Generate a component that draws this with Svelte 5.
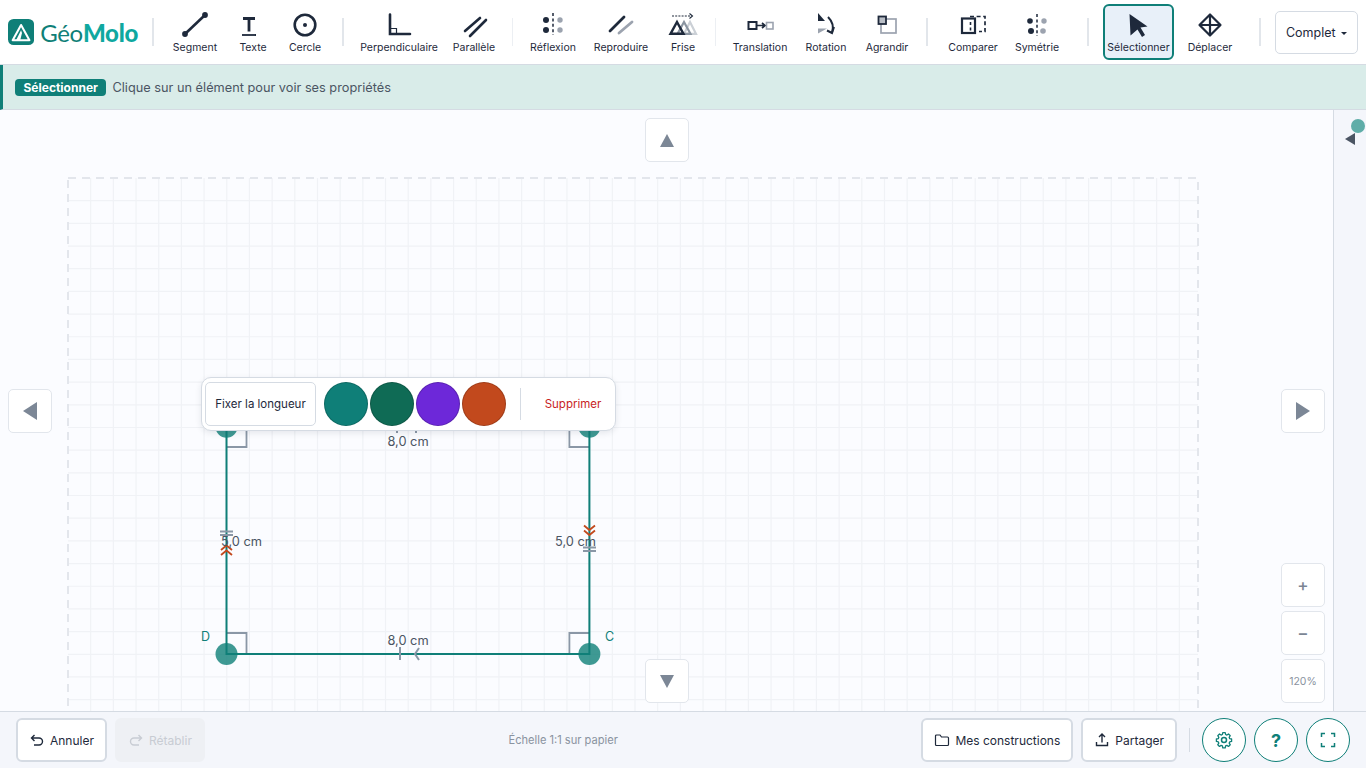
<script>
  const tools = [
    { sep: true, l: 14, r: 14 },
    { id: 'segment', label: 'Segment', w: 54 },
    { id: 'texte', label: 'Texte', w: 62 },
    { id: 'cercle', label: 'Cercle', w: 42 },
    { sep: true, l: 16, r: 16 },
    { id: 'perp', label: 'Perpendiculaire', w: 78 },
    { id: 'para', label: 'Parallèle', w: 72 },
    { sep: true, thin: true, l: 2, r: 3 },
    { id: 'reflex', label: 'Réflexion', w: 74 },
    { id: 'repro', label: 'Reproduire', w: 62 },
    { id: 'frise', label: 'Frise', w: 62 },
    { sep: true, thin: true, l: 1, r: 2 },
    { id: 'trans', label: 'Translation', w: 84 },
    { id: 'rot', label: 'Rotation', w: 48 },
    { id: 'agr', label: 'Agrandir', w: 74 },
    { sep: true, l: 2, r: 2 },
    { id: 'comp', label: 'Comparer', w: 86 },
    { id: 'sym', label: 'Symétrie', w: 42 },
    { sep: true, l: 29, r: 14 },
    { id: 'select', label: 'Sélectionner', w: 71, active: true },
    { id: 'move', label: 'Déplacer', w: 60, ml: 6 },
    { sep: true, l: 19, r: 14 }
  ];
  const swatches = ['#0f7f78', '#0f6b55', '#6d28d9', '#c2491d'];

  // sheet grid: half a centimetre at 120%
  const step = 22.68;
  const gridX = Array.from({ length: 49 }, (_, i) => 68 + step * (i + 1));
  const gridY = Array.from({ length: 24 }, (_, i) => 178 + step * (i + 1));
</script>

<div class="app">
  <header class="toolbar">
    <div class="logo">
      <svg width="28" height="28" viewBox="0 0 28 28">
        <rect width="28" height="28" rx="6" fill="#0f7f78" />
        <path d="M14 6.5 L23 22.8 H5 Z" fill="none" stroke="#fff" stroke-width="2.2" stroke-linejoin="round" />
        <path d="M14 12 L8.5 23 H13 L15 15 Z" fill="#fff" />
      </svg>
      <span class="logo-text">Géo<b>Molo</b></span>
    </div>

    {#each tools as t}
      {#if t.sep}
        <span class="sep" class:thin={t.thin} style="margin-left:{t.l}px;margin-right:{t.r}px"></span>
      {:else}
        <button class="tool" class:active={t.active} style="width:{t.w}px;margin-left:{t.ml || 0}px">
          <svg class="ico" width="36" height="30" viewBox="0 0 36 30">
            {#if t.id === 'segment'}
              <path d="M8 23 L28 4" stroke="#1e293b" stroke-width="2.6" />
              <circle cx="8" cy="23" r="2.9" fill="#1e293b" /><circle cx="28" cy="4" r="2.9" fill="#1e293b" />
            {:else if t.id === 'texte'}
              <path d="M8 7.5 H20 M14 7.5 V20.5" stroke="#1e293b" stroke-width="2.8" fill="none" />
              <path d="M7 24 H21" stroke="#1e293b" stroke-width="1.8" />
            {:else if t.id === 'cercle'}
              <circle cx="18" cy="14" r="10.3" fill="none" stroke="#1e293b" stroke-width="2.6" />
              <circle cx="18" cy="14" r="2" fill="#1e293b" />
            {:else if t.id === 'perp'}
              <path d="M9 3.5 V23 H29" stroke="#1e293b" stroke-width="2.6" fill="none" stroke-linecap="round" />
              <path d="M10 17.5 H15.5 V22" stroke="#1e293b" stroke-width="1.2" fill="none" />
            {:else if t.id === 'para'}
              <path d="M9 20 L24 7 M14 25 L30 9" stroke="#1e293b" stroke-width="2.6" stroke-linecap="round" />
            {:else if t.id === 'reflex'}
              <path d="M18 2 V24" stroke="#1e293b" stroke-width="1.5" stroke-dasharray="3 2.4" />
              <circle cx="11" cy="9" r="3" fill="#1e293b" /><circle cx="11" cy="19" r="3" fill="#1e293b" />
              <circle cx="25" cy="9" r="2.7" fill="#9ca3af" /><circle cx="25" cy="19" r="2.7" fill="#9ca3af" />
            {:else if t.id === 'sym'}
              <path d="M18 3 V25" stroke="#1e293b" stroke-width="1.5" stroke-dasharray="3 2.4" />
              <circle cx="11" cy="10" r="2.8" fill="#1e293b" /><circle cx="12" cy="20" r="3" fill="#1e293b" />
              <circle cx="25" cy="10" r="2.7" fill="#9ca3af" /><circle cx="24" cy="20" r="2.8" fill="#9ca3af" />
            {:else if t.id === 'repro'}
              <path d="M7 20 L21 6" stroke="#1e293b" stroke-width="2.8" stroke-linecap="round" />
              <path d="M16 22 L29 11" stroke="#9ca3af" stroke-width="2.8" stroke-linecap="round" />
            {:else if t.id === 'frise'}
              <path d="M7 5 H26" stroke="#1e293b" stroke-width="1.1" stroke-dasharray="2 1.2" />
              <path d="M24.5 2.5 L27.5 5 L24.5 7.5" stroke="#1e293b" stroke-width="1.1" fill="none" />
              <path d="M25 11 L31 22.8 H19 Z" fill="none" stroke="#cbd0d6" stroke-width="2.2" />
              <path d="M19 11 L25.5 22.8 H12.5 Z" fill="none" stroke="#8b95a1" stroke-width="2.2" />
              <path d="M12 11 L18.5 22.8 H5.5 Z" fill="none" stroke="#1e293b" stroke-width="2.4" />
            {:else if t.id === 'trans'}
              <rect x="6.5" y="11" width="8" height="7" fill="none" stroke="#1e293b" stroke-width="2" />
              <path d="M15 14.5 H22.5 M20 12 L23 14.5 L20 17" stroke="#1e293b" stroke-width="1.7" fill="none" />
              <rect x="24.5" y="11.5" width="6.5" height="6.5" fill="none" stroke="#9ca3af" stroke-width="1.6" />
            {:else if t.id === 'rot'}
              <path d="M10 2 V10 H17 Z" fill="#1e293b" />
              <path d="M10 22.5 V17.5 H19 Z" fill="#9ca3af" />
              <path d="M20 6 Q27 13 24 21.5" stroke="#1e293b" stroke-width="2" fill="none" />
              <path d="M19 19.5 L24 22 L26 16" stroke="#1e293b" stroke-width="2" fill="none" />
            {:else if t.id === 'agr'}
              <rect x="12" y="8" width="15" height="14" fill="none" stroke="#9ca3af" stroke-width="1.7" />
              <rect x="9.5" y="5.5" width="7.5" height="7.5" fill="#b9bec6" stroke="#1e293b" stroke-width="1.8" />
            {:else if t.id === 'comp'}
              <rect x="7" y="7.5" width="13" height="14.5" fill="none" stroke="#1e293b" stroke-width="2.2" />
              <path d="M15.5 11 V21" stroke="#1e293b" stroke-width="1.6" stroke-dasharray="3 2.5" />
              <path d="M15 5.5 H30 V20.5 H24" fill="none" stroke="#1e293b" stroke-width="1.7" stroke-dasharray="4 2.6" />
            {:else if t.id === 'select'}
              <path d="M8.5 3 L26.5 15.5 L19.5 16.5 L24 24 L21 26 L16.5 18.5 L9.5 24.5 Z" fill="#1e293b" />
            {:else if t.id === 'move'}
              <path d="M18 3.5 L28.5 14 L18 24.5 L7.5 14 Z M18 3.5 V24.5 M7.5 14 H28.5" fill="none" stroke="#1e293b" stroke-width="2.2" stroke-linejoin="round" />
            {/if}
          </svg>
          <span class="tool-label">{t.label}</span>
        </button>
      {/if}
    {/each}

    <button class="mode">Complet <span class="caret"></span></button>
  </header>

  <div class="hint">
    <span class="badge">Sélectionner</span>
    <span class="hint-text">Clique sur un élément pour voir ses propriétés</span>
  </div>

  <div class="middle">
    <main class="canvas">
      <svg class="sheet" width="1333" height="601" viewBox="0 110 1333 601">
        <g stroke="#f0f2f6" stroke-width="1.2">
          {#each gridX as x}
            <line x1={x} y1="178" x2={x} y2="980" />
          {/each}
          {#each gridY as y}
            <line x1="68" y1={y} x2="1198" y2={y} />
          {/each}
        </g>
        <rect x="68" y="178" width="1130" height="800" fill="none" stroke="#e3e6ec" stroke-width="2" stroke-dasharray="8 6" />

        <!-- right angle marks -->
        <g fill="none" stroke="#8a97a6" stroke-width="1.8">
          <path d="M226.5 447 H246.5 V427" />
          <path d="M589.4 447 H569.4 V427" />
          <path d="M226.5 633 H246.5 V654" />
          <path d="M589.4 633 H569.4 V654" />
        </g>

        <path d="M226.5 426.7 H589.4 V654 H226.5 Z" fill="none" stroke="#0f7f78" stroke-width="2" />

        <circle cx="226.5" cy="426.7" r="11" fill="#0f7f78" fill-opacity="0.8" />
        <circle cx="589.4" cy="426.7" r="11" fill="#0f7f78" fill-opacity="0.8" />
        <circle cx="226.5" cy="654" r="11" fill="#0f7f78" fill-opacity="0.8" />
        <circle cx="589.4" cy="654" r="11" fill="#0f7f78" fill-opacity="0.8" />

        <!-- edge marks -->
        <g stroke="#8a97a6" stroke-width="2" fill="none">
          <path d="M220 531.5 H233 M220 535 H233" />
          <path d="M583 547.5 H596 M583 551 H596" />
          <path d="M400 647 V660" />
          <path d="M419 648 L415 654 L419 660" />
          <path d="M397 420 V433 M416 420 V433" />
        </g>
        <g stroke="#c2491d" stroke-width="1.8" fill="none">
          <path d="M221 550 L226.5 545.5 L232 550 M221 555 L226.5 550.5 L232 555" />
          <path d="M584 525.5 L589.4 530 L595 525.5 M584 530.5 L589.4 535 L595 530.5" />
        </g>

        <text class="len" x="408" y="445.5" text-anchor="middle">8,0 cm</text>
        <text class="len" x="408" y="645" text-anchor="middle">8,0 cm</text>
        <text class="len" x="221" y="546">5,0 cm</text>
        <text class="len" x="555" y="546">5,0 cm</text>
        <text class="pt" x="201" y="641">D</text>
        <text class="pt" x="605" y="641">C</text>
      </svg>

      <button class="nav nav-top"><span class="tri up"></span></button>
      <button class="nav nav-left"><span class="tri left"></span></button>
      <button class="nav nav-right"><span class="tri right"></span></button>
      <button class="nav nav-bottom"><span class="tri down"></span></button>

      <div class="zoom">
        <button class="nav-static big">+</button>
        <button class="nav-static big">−</button>
        <button class="nav-static pct">120%</button>
      </div>

      <div class="popup">
        <button class="fix">Fixer la longueur</button>
        <div class="swatches">
          {#each swatches as c}
            <span class="swatch" style="background:{c}"></span>
          {/each}
        </div>
        <span class="popup-sep"></span>
        <button class="del">Supprimer</button>
      </div>
    </main>

    <aside class="side">
      <span class="side-tri"></span>
      <span class="side-dot"></span>
    </aside>
  </div>

  <footer class="footer">
    <button class="btn">
      <svg width="16" height="16" viewBox="0 0 16 16" fill="none" stroke="#1e293b" stroke-width="1.4"><path d="M5.5 3 L2.5 6 L5.5 9 M3 6 H10 A3.5 3.5 0 0 1 10 13 H5" /></svg>
      Annuler
    </button>
    <button class="btn off">
      <svg width="16" height="16" viewBox="0 0 16 16" fill="none" stroke="#c8ccd3" stroke-width="1.4"><path d="M10.5 3 L13.5 6 L10.5 9 M13 6 H6 A3.5 3.5 0 0 0 6 13 H11" /></svg>
      Rétablir
    </button>
    <span class="scale">Échelle 1:1 sur papier</span>
    <button class="btn">
      <svg width="16" height="16" viewBox="0 0 16 16" fill="none" stroke="#1e293b" stroke-width="1.2"><path d="M1.5 4 A1 1 0 0 1 2.5 3 H6 L7.5 5 H13.5 A1 1 0 0 1 14.5 6 V12.5 A1 1 0 0 1 13.5 13.5 H2.5 A1 1 0 0 1 1.5 12.5 Z" /></svg>
      Mes constructions
    </button>
    <button class="btn">
      <svg width="16" height="16" viewBox="0 0 16 16" fill="none" stroke="#1e293b" stroke-width="1.4"><path d="M8 10.5 V2.5 M5 5 L8 2 L11 5 M2.5 10 V13.5 H13.5 V10" /></svg>
      Partager
    </button>
    <span class="foot-sep"></span>
    <button class="round" aria-label="Réglages">
      <svg width="20" height="20" viewBox="0 0 24 24" fill="none" stroke="#0f7f78" stroke-width="1.8"><circle cx="12" cy="12" r="3" /><path d="M10.3 3 h3.4 l.5 2.6 1.9.8 2.2-1.5 2.4 2.4-1.5 2.2.8 1.9 2.6.5 v3.4 l-2.6.5 -.8 1.9 1.5 2.2 -2.4 2.4 -2.2-1.5 -1.9.8 -.5 2.6 h-3.4 l-.5-2.6 -1.9-.8 -2.2 1.5 -2.4-2.4 1.5-2.2 -.8-1.9 -2.6-.5 v-3.4 l2.6-.5 .8-1.9 -1.5-2.2 2.4-2.4 2.2 1.5 1.9-.8 Z" transform="translate(12 12) scale(.86) translate(-12 -13.3)" stroke-linejoin="round" /></svg>
    </button>
    <button class="round q">?</button>
    <button class="round" aria-label="Plein écran">
      <svg width="16" height="16" viewBox="0 0 16 16" fill="none" stroke="#0f7f78" stroke-width="1.5"><path d="M1.5 5 V1.5 H5 M11 1.5 H14.5 V5 M14.5 11 V14.5 H11 M5 14.5 H1.5 V11" /></svg>
    </button>
  </footer>
</div>

<style>
  :global(body) {
    margin: 0;
    font-family: Inter, "Liberation Sans", sans-serif;
    color: #1e293b;
  }

  button {
    font-family: inherit;
    cursor: pointer;
    padding: 0;
  }

  .app {
    width: 1366px;
    height: 768px;
    display: flex;
    flex-direction: column;
    overflow: hidden;
  }

  /* TOOLBAR */

  .toolbar {
    height: 64px;
    flex: none;
    display: flex;
    align-items: center;
    padding-left: 8px;
    background: #fff;
    border-bottom: 1px solid #d5dbe3;
  }

  .logo {
    width: 130px;
    display: flex;
    align-items: center;
    gap: 6px;
  }

  .logo-text {
    font-family: Lato, sans-serif;
    font-size: 24px;
    color: #0f7f78;
    letter-spacing: -0.3px;
  }

  .logo-text b {
    color: #0fa8a0;
    font-weight: 900;
  }

  .sep {
    flex: none;
    width: 2px;
    height: 28px;
    background: #e2e6eb;
  }

  .sep.thin {
    width: 1px;
    background: #eceff3;
  }

  .tool {
    flex: none;
    height: 56px;
    display: flex;
    flex-direction: column;
    align-items: center;
    justify-content: flex-start;
    padding-top: 5px;
    background: none;
    border: 2px solid transparent;
    border-radius: 6px;
    white-space: nowrap;
    box-sizing: border-box;
  }

  .tool.active {
    background: #e8f0f9;
    border-color: #0f7f78;
  }

  .ico {
    display: block;
    flex: none;
  }

  .tool-label {
    font-size: 10.5px;
    line-height: 13px;
    color: #1e293b;
  }

  .mode {
    width: 83px;
    height: 43px;
    flex: none;
    background: #fff;
    border: 1px solid #d5dbe3;
    border-radius: 5px;
    font-size: 12.5px;
    color: #1e293b;
  }

  .caret {
    display: inline-block;
    margin-left: 2px;
    vertical-align: middle;
    border: 3px solid transparent;
    border-top-color: #1e293b;
    border-bottom-width: 0;
  }

  /* HINT */

  .hint {
    height: 44px;
    flex: none;
    display: flex;
    align-items: center;
    gap: 6px;
    padding-left: 12px;
    background: #d9ece9;
    border-left: 3px solid #0f7f78;
    border-bottom: 1px solid #d5dbe3;
  }

  .badge {
    padding: 0 8.5px;
    height: 17px;
    line-height: 17px;
    border-radius: 4px;
    background: #0f7f78;
    color: #fff;
    font-size: 12px;
    font-weight: 700;
  }

  .hint-text {
    font-size: 12.75px;
    color: #4b5563;
  }

  /* CANVAS */

  .middle {
    flex: 1;
    min-height: 0;
    display: flex;
  }

  .canvas {
    position: relative;
    flex: 1;
    overflow: hidden;
    background: #fbfcff;
  }

  .sheet {
    display: block;
  }

  .len {
    font-size: 12.8px;
    fill: #4b5563;
  }

  .pt {
    font-size: 12.5px;
    fill: #0f7f78;
  }

  .nav,
  .nav-static {
    width: 44px;
    height: 44px;
    display: flex;
    align-items: center;
    justify-content: center;
    background: #fff;
    border: 1px solid #e2e6ec;
    border-radius: 5px;
    color: #7b8593;
  }

  .nav {
    position: absolute;
  }

  .nav-top { left: 645px; top: 8px; }
  .nav-bottom { left: 645px; top: 549px; }
  .nav-left { left: 8px; top: 279px; }
  .nav-right { left: 1281px; top: 279px; }

  .tri {
    display: block;
    border: 7px solid transparent;
  }

  .tri.up { border-bottom: 13px solid #7c8796; border-top-width: 0; }
  .tri.down { border-top: 13px solid #7c8796; border-bottom-width: 0; }
  .tri.left { border-right: 14px solid #7c8796; border-left-width: 0; border-top-width: 9px; border-bottom-width: 9px; }
  .tri.right { border-left: 14px solid #7c8796; border-right-width: 0; border-top-width: 9px; border-bottom-width: 9px; }

  .zoom {
    position: absolute;
    left: 1281px;
    top: 453px;
    display: flex;
    flex-direction: column;
    gap: 4px;
  }

  .big {
    font-size: 17px;
    font-weight: 500;
  }

  .pct {
    font-size: 10.5px;
    color: #8a93a0;
  }

  .popup {
    position: absolute;
    left: 201px;
    top: 267px;
    width: 415px;
    height: 54px;
    box-sizing: border-box;
    display: flex;
    align-items: center;
    padding-left: 3px;
    background: #fff;
    border: 1px solid #d5dbe3;
    border-radius: 10px;
    box-shadow: 0 2px 6px rgba(30, 41, 59, 0.1);
  }

  .fix {
    width: 111px;
    height: 44px;
    flex: none;
    background: #fff;
    border: 1px solid #d5dbe3;
    border-radius: 5px;
    font-size: 11.5px;
    color: #1e293b;
  }

  .swatches {
    display: flex;
    gap: 2px;
    margin-left: 8px;
  }

  .swatch {
    width: 44px;
    height: 44px;
    box-sizing: border-box;
    border-radius: 50%;
    border: 1.5px solid rgba(0, 0, 0, 0.18);
  }

  .popup-sep {
    width: 1px;
    height: 32px;
    margin-left: 14px;
    background: #d5dbe3;
  }

  .del {
    flex: 1;
    height: 44px;
    background: none;
    border: none;
    font-size: 11.5px;
    color: #c81e1e;
    padding-left: 10px;
  }

  .side {
    position: relative;
    width: 32px;
    flex: none;
    background: #f4f6fb;
    border-left: 1px solid #d5dbe3;
  }

  .side-tri {
    position: absolute;
    left: 11px;
    top: 23px;
    border: 6.5px solid transparent;
    border-right: 10px solid #4b5563;
    border-left-width: 0;
  }

  .side-dot {
    position: absolute;
    left: 17px;
    top: 9px;
    width: 14px;
    height: 14px;
    border-radius: 50%;
    background: #5fada8;
  }

  /* FOOTER */

  .footer {
    height: 56px;
    flex: none;
    display: flex;
    align-items: center;
    gap: 8px;
    padding: 0 16px;
    background: #f4f6fb;
    border-top: 1px solid #d5dbe3;
  }

  .btn {
    height: 44px;
    display: flex;
    align-items: center;
    justify-content: center;
    gap: 5px;
    padding: 0 11px;
    background: #fff;
    border: 2px solid #d5dbe3;
    border-radius: 6px;
    font-size: 12px;
    color: #1e293b;
    white-space: nowrap;
  }

  .btn.off {
    background: #eef0f4;
    border-color: #eef0f4;
    color: #c8ccd3;
  }

  .scale {
    flex: 1;
    text-align: center;
    font-size: 11.1px;
    color: #8a93a0;
  }

  .foot-sep {
    width: 1px;
    height: 24px;
    margin: 0 4px;
    background: #d5dbe3;
  }

  .round {
    width: 44px;
    height: 44px;
    display: flex;
    align-items: center;
    justify-content: center;
    background: #fff;
    border: 1px solid #0f7f78;
    border-radius: 50%;
    color: #0f7f78;
  }

  .q {
    font-size: 18px;
    font-weight: 700;
  }
</style>
